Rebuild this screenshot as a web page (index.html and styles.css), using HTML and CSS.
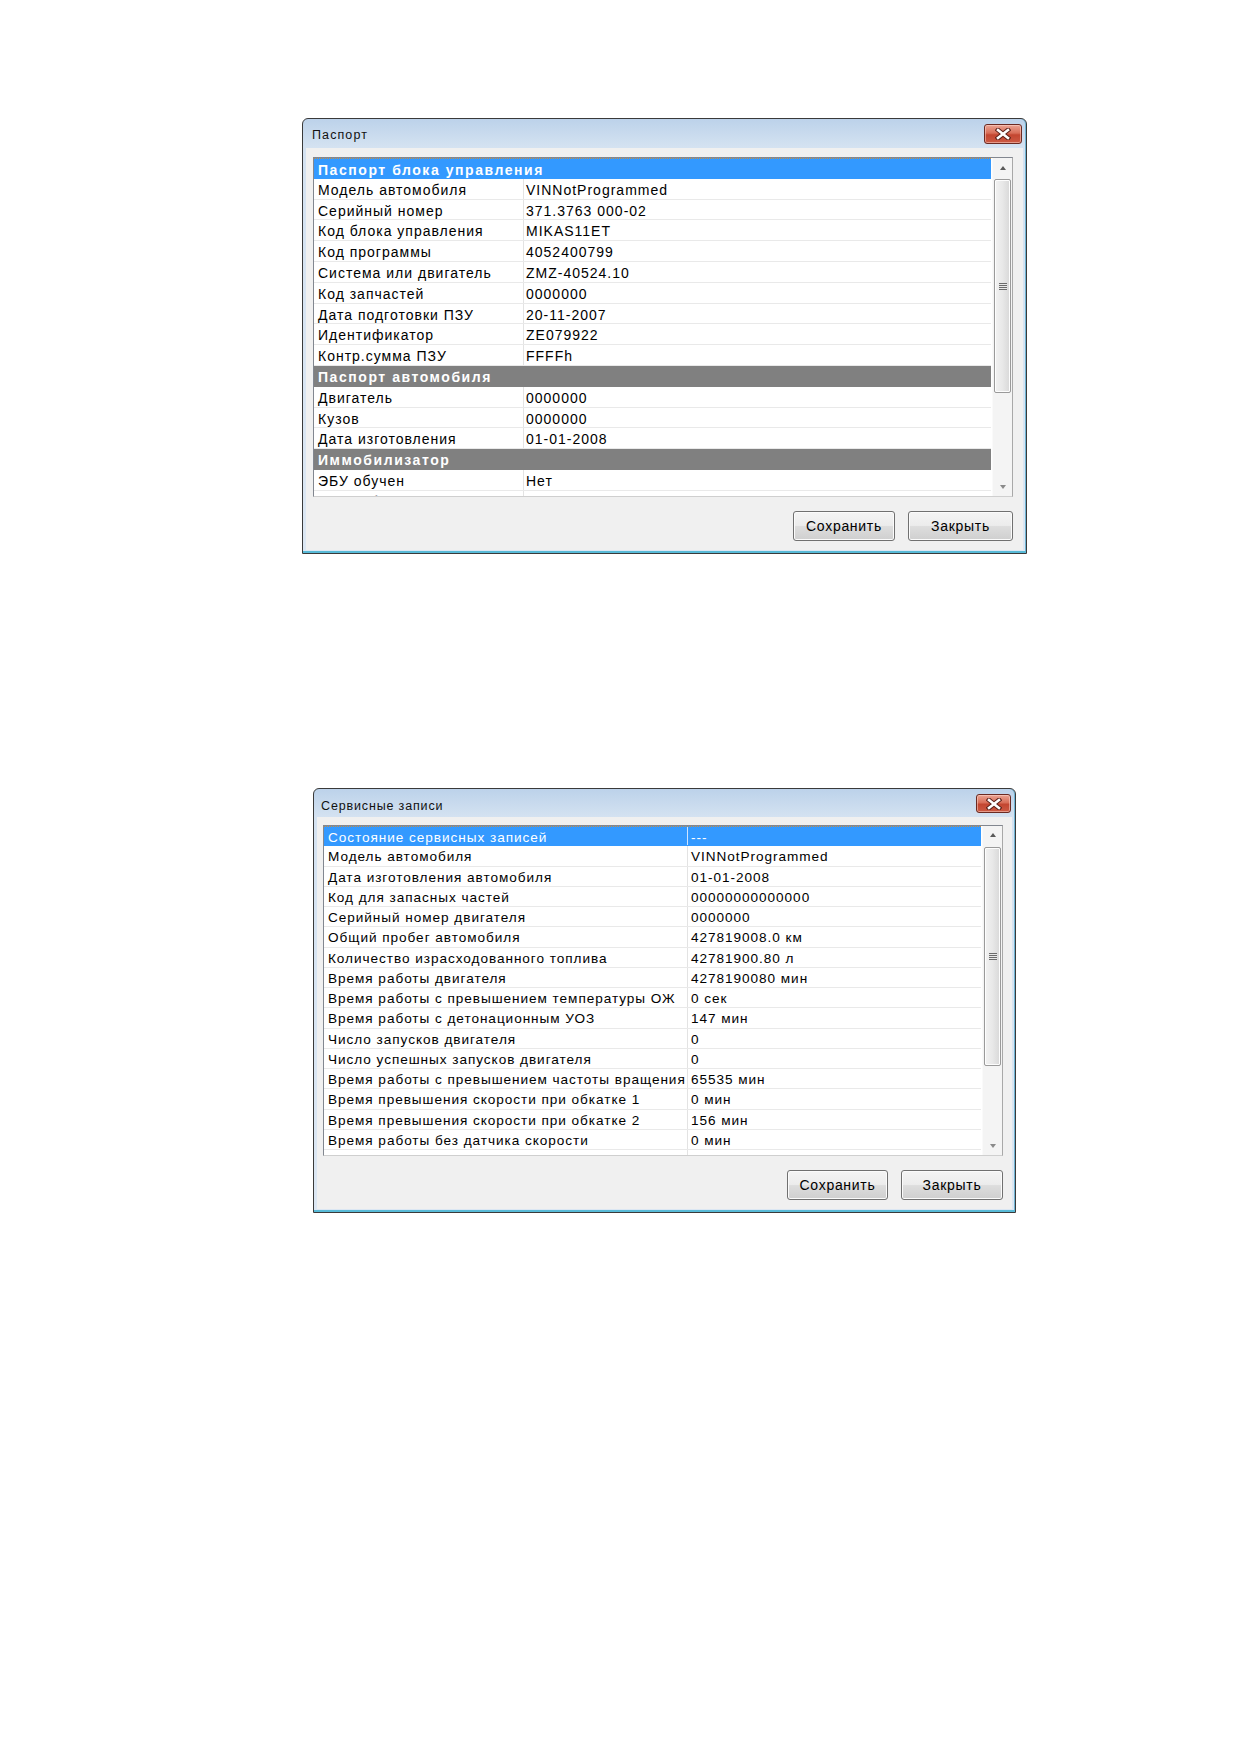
FILE: index.html
```html
<!DOCTYPE html>
<html lang="ru">
<head>
    <meta charset="UTF-8">
    <title>Паспорт и сервисные записи</title>
    <link rel="stylesheet" href="styles.css">
</head>
<body>
<div class="page">

    <!-- окно паспорта -->
    <div class="dlg dlg-passport">
        <div class="titlebar">
            <span class="caption">Паспорт</span>
            <button class="close" type="button">
                <svg width="16" height="12" viewBox="0 0 16 12">
                    <path d="M3 2 L13 10 M13 2 L3 10" stroke="#5a2018" stroke-width="4.6" stroke-linecap="square"/>
                    <path d="M3 2 L13 10 M13 2 L3 10" stroke="#fff" stroke-width="2.6" stroke-linecap="square"/>
                </svg>
            </button>
        </div>
        <div class="client">
            <div class="list">
                <div class="rows">
                    <div class="row sel group">Паспорт блока управления</div>
                    <div class="row"><span class="name">Модель автомобиля</span><span class="val">VINNotProgrammed</span></div>
                    <div class="row"><span class="name">Серийный номер</span><span class="val">371.3763 000-02</span></div>
                    <div class="row"><span class="name">Код блока управления</span><span class="val">MIKAS11ET</span></div>
                    <div class="row"><span class="name">Код программы</span><span class="val">4052400799</span></div>
                    <div class="row"><span class="name">Система или двигатель</span><span class="val">ZMZ-40524.10</span></div>
                    <div class="row"><span class="name">Код запчастей</span><span class="val">0000000</span></div>
                    <div class="row"><span class="name">Дата подготовки ПЗУ</span><span class="val">20-11-2007</span></div>
                    <div class="row"><span class="name">Идентификатор</span><span class="val">ZE079922</span></div>
                    <div class="row"><span class="name">Контр.сумма ПЗУ</span><span class="val">FFFFh</span></div>
                    <div class="row group">Паспорт автомобиля</div>
                    <div class="row"><span class="name">Двигатель</span><span class="val">0000000</span></div>
                    <div class="row"><span class="name">Кузов</span><span class="val">0000000</span></div>
                    <div class="row"><span class="name">Дата изготовления</span><span class="val">01-01-2008</span></div>
                    <div class="row group">Иммобилизатор</div>
                    <div class="row"><span class="name">ЭБУ обучен</span><span class="val">Нет</span></div>
                    <div class="row"><span class="name">ЭБУ заблокирован</span><span class="val">Да</span></div>
                </div>
                <div class="vscroll">
                    <div class="sb-btn"><i class="arrow-up"></i></div>
                    <div class="thumb"><i class="grip"></i></div>
                    <div class="track"></div>
                    <div class="sb-btn"><i class="arrow-down"></i></div>
                </div>
            </div>
            <div class="buttons">
                <button class="btn btn-save" type="button">Сохранить</button>
                <button class="btn btn-close" type="button">Закрыть</button>
            </div>
        </div>
    </div>

    <!-- окно сервисных записей -->
    <div class="dlg dlg-service">
        <div class="titlebar">
            <span class="caption">Сервисные записи</span>
            <button class="close" type="button">
                <svg width="16" height="12" viewBox="0 0 16 12">
                    <path d="M3 2 L13 10 M13 2 L3 10" stroke="#5a2018" stroke-width="4.6" stroke-linecap="square"/>
                    <path d="M3 2 L13 10 M13 2 L3 10" stroke="#fff" stroke-width="2.6" stroke-linecap="square"/>
                </svg>
            </button>
        </div>
        <div class="client">
            <div class="list">
                <div class="rows">
                    <div class="row sel"><span class="name">Состояние сервисных записей</span><span class="val">---</span></div>
                    <div class="row"><span class="name">Модель автомобиля</span><span class="val">VINNotProgrammed</span></div>
                    <div class="row"><span class="name">Дата изготовления автомобиля</span><span class="val">01-01-2008</span></div>
                    <div class="row"><span class="name">Код для запасных частей</span><span class="val">00000000000000</span></div>
                    <div class="row"><span class="name">Серийный номер двигателя</span><span class="val">0000000</span></div>
                    <div class="row"><span class="name">Общий пробег автомобиля</span><span class="val">427819008.0 км</span></div>
                    <div class="row"><span class="name">Количество израсходованного топлива</span><span class="val">42781900.80 л</span></div>
                    <div class="row"><span class="name">Время работы двигателя</span><span class="val">4278190080 мин</span></div>
                    <div class="row"><span class="name">Время работы с превышением температуры ОЖ</span><span class="val">0 сек</span></div>
                    <div class="row"><span class="name">Время работы с детонационным УОЗ</span><span class="val">147 мин</span></div>
                    <div class="row"><span class="name">Число запусков двигателя</span><span class="val">0</span></div>
                    <div class="row"><span class="name">Число успешных запусков двигателя</span><span class="val">0</span></div>
                    <div class="row"><span class="name">Время работы с превышением частоты вращения</span><span class="val">65535 мин</span></div>
                    <div class="row"><span class="name">Время превышения скорости при обкатке 1</span><span class="val">0 мин</span></div>
                    <div class="row"><span class="name">Время превышения скорости при обкатке 2</span><span class="val">156 мин</span></div>
                    <div class="row"><span class="name">Время работы без датчика скорости</span><span class="val">0 мин</span></div>
                    <div class="row"><span class="name">Число поездок длиной более 20 км</span><span class="val">0</span></div>
                </div>
                <div class="vscroll">
                    <div class="sb-btn"><i class="arrow-up"></i></div>
                    <div class="thumb"><i class="grip"></i></div>
                    <div class="track"></div>
                    <div class="sb-btn"><i class="arrow-down"></i></div>
                </div>
            </div>
            <div class="buttons">
                <button class="btn btn-save" type="button">Сохранить</button>
                <button class="btn btn-close" type="button">Закрыть</button>
            </div>
        </div>
    </div>

</div>
</body>
</html>
```

FILE: styles.css
```css
*{
    margin: 0;
    padding: 0;
    box-sizing: border-box;
}

body{
    background-color: #fff;
    font-family: "Liberation Sans", Arial, sans-serif;
    color: #000;
}

/* страница: два окна друг под другом */
.page{
    display: flex;
    flex-direction: column;
    align-items: flex-start;
    padding-top: 118px;
}

/* рамка окна */
.dlg{
    display: flex;
    flex-direction: column;
    border: 1px solid #3a3a3a;
    border-radius: 6px 6px 0 0;
    padding: 0 3px 3px;
    background: linear-gradient(#bcd2ea, #d4e2f1 28px, #dce7f3);
    box-shadow: inset 0 -2px 0 #58bad7, inset -1px 0 0 #6fb4d4;
}
.dlg-passport{
    width: 725px;
    margin-left: 302px;
}
.dlg-service{
    width: 703px;
    margin-left: 313px;
    margin-top: 234px;
}

/* заголовок */
.titlebar{
    display: flex;
    align-items: flex-start;
    height: 29px;
    padding: 0 1px 0 6px;
}
.dlg-service .titlebar{
    height: 28px;
    padding-left: 4px;
}
.caption{
    font-size: 12.5px;
    line-height: 14px;
    letter-spacing: 1.1px;
    padding-top: 9px;
    color: #111;
}
.dlg-service .caption{
    padding-top: 10px;
    letter-spacing: 0.85px;
}

/* кнопка закрытия окна */
.close{
    margin-left: auto;
    margin-top: 5px;
    width: 38px;
    height: 20px;
    border: 1px solid #6b2a22;
    border-radius: 3px;
    background: linear-gradient(#eba493, #d86e58 45%, #c34630 55%, #cc5a44);
    box-shadow: inset 0 0 0 1px rgba(255, 220, 210, 0.5);
    display: flex;
    align-items: center;
    justify-content: center;
}
.dlg-service .close{
    width: 35px;
    height: 19px;
}

/* рабочая область */
.client{
    display: flex;
    flex-direction: column;
    background-color: #f0f0f0;
    padding: 9px 10px 9px 7px;
}
.dlg-service .client{
    padding: 8px 9px 9px 6px;
}

/* список параметров */
.list{
    display: flex;
    height: 340px;
    background-color: #fff;
    border: 1px solid;
    border-color: #828790 #a8a8a8 #cfcfcf #828790;
    overflow: hidden;
}
.dlg-service .list{
    height: 331px;
}
.rows{
    flex: 1;
    overflow: hidden;
    padding-right: 1px;
}

.row{
    display: flex;
    height: 20.8px;
    padding-top: 3px;
    line-height: 17.8px;
    font-size: 14px;
    letter-spacing: 1px;
    white-space: nowrap;
    border-bottom: 1px solid #e9e9e9;
}
.dlg-service .row{
    height: 20.25px;
    padding-top: 2px;
    line-height: 18.25px;
    font-size: 13.6px;
    letter-spacing: 0.95px;
}

.name{
    flex: none;
    width: 210px;
    padding-left: 4px;
    border-right: 1px solid #e3e3e3;
    margin-top: -3px;
    padding-top: 3px;
    overflow: hidden;
}
.dlg-service .name{
    width: 364px;
    margin-top: -2px;
    padding-top: 2px;
}
.val{
    padding-left: 2px;
}
.dlg-service .val{
    padding-left: 3px;
}

/* строка-раздел */
.row.group{
    background-color: #808080;
    color: #fff;
    font-weight: bold;
    letter-spacing: 1.55px;
    padding-left: 4px;
    border-bottom-color: #808080;
}

/* выделенная строка с рамкой фокуса */
.row.sel{
    background-color: #3399ff;
    color: #fff;
    border-top: 1px dotted #c98a3c;
    border-bottom-color: #3399ff;
}
.row.sel .name{
    border-right-color: #cfe4ff;
}

/* вертикальная полоса прокрутки */
.vscroll{
    flex: none;
    width: 20px;
    display: flex;
    flex-direction: column;
    align-items: center;
    background-color: #f4f4f4;
    border-left: 1px solid #fafafa;
}
.sb-btn{
    flex: none;
    height: 19px;
    width: 100%;
    display: flex;
    align-items: center;
    justify-content: center;
}
.dlg-service .sb-btn{
    height: 18px;
}
.arrow-up{
    width: 0;
    height: 0;
    border-left: 3.5px solid transparent;
    border-right: 3.5px solid transparent;
    border-bottom: 4px solid #5a5a5a;
}
.arrow-down{
    width: 0;
    height: 0;
    border-left: 3.5px solid transparent;
    border-right: 3.5px solid transparent;
    border-top: 4px solid #8a8a8a;
}
.thumb{
    flex: none;
    width: 17px;
    height: 214px;
    margin-top: 2px;
    border: 1px solid #9a9a9a;
    border-radius: 2px;
    background: linear-gradient(to right, #f2f2f2, #e8e8e8 50%, #d8d8d8);
    box-shadow: inset 0 0 0 1px #fdfdfd;
    display: flex;
    align-items: center;
    justify-content: center;
}
.dlg-service .thumb{
    height: 219px;
    margin-top: 3px;
}
.grip{
    width: 8px;
    height: 7px;
    background: repeating-linear-gradient(#6b6b6b 0 1px, #e8e8e8 1px 2px);
}
.track{
    flex: 1;
}

/* кнопки внизу окна */
.buttons{
    display: flex;
    justify-content: flex-end;
    gap: 13px;
    margin-top: 14px;
}
.btn{
    height: 30px;
    width: 102px;
    border: 1px solid #707070;
    border-radius: 3px;
    background: linear-gradient(#f4f4f4, #ececec 48%, #dddddd 52%, #cfcfcf);
    box-shadow: inset 0 0 0 1px #fbfbfb;
    font-family: "Liberation Sans", Arial, sans-serif;
    font-size: 14px;
    letter-spacing: 0.7px;
    color: #000;
}
.btn-close{
    width: 105px;
}
.dlg-service .btn-save{
    width: 101px;
}
.dlg-service .btn-close{
    width: 102px;
}
```
